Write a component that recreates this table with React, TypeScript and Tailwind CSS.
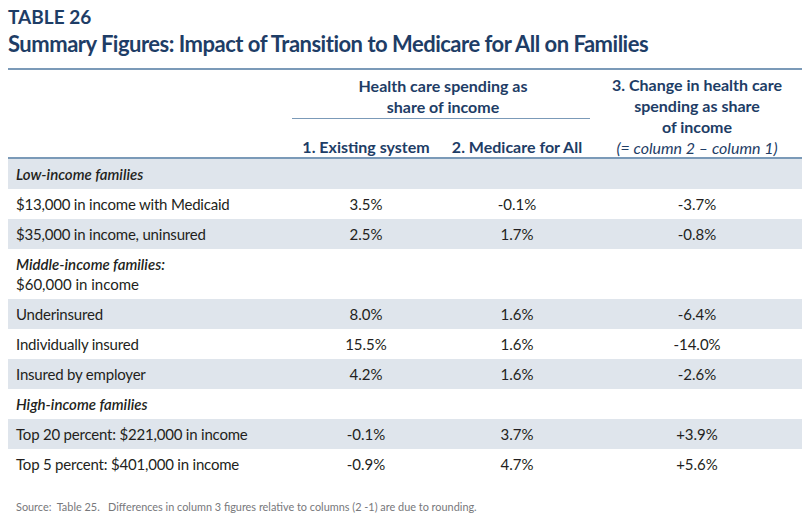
import React from "react";

type Row =
  | { kind: "cat"; label: string; shaded: boolean }
  | { kind: "cat2"; label: string; sub: string; shaded: boolean }
  | { kind: "data"; label: string; a: string; b: string; c: string; shaded: boolean };

const rows: Row[] = [
  { kind: "cat", label: "Low-income families", shaded: true },
  { kind: "data", label: "$13,000 in income with Medicaid", a: "3.5%", b: "-0.1%", c: "-3.7%", shaded: false },
  { kind: "data", label: "$35,000 in income, uninsured", a: "2.5%", b: "1.7%", c: "-0.8%", shaded: true },
  { kind: "cat2", label: "Middle-income families:", sub: "$60,000 in income", shaded: false },
  { kind: "data", label: "Underinsured", a: "8.0%", b: "1.6%", c: "-6.4%", shaded: true },
  { kind: "data", label: "Individually insured", a: "15.5%", b: "1.6%", c: "-14.0%", shaded: false },
  { kind: "data", label: "Insured by employer", a: "4.2%", b: "1.6%", c: "-2.6%", shaded: true },
  { kind: "cat", label: "High-income families", shaded: false },
  { kind: "data", label: "Top 20 percent: $221,000 in income", a: "-0.1%", b: "3.7%", c: "+3.9%", shaded: true },
  { kind: "data", label: "Top 5 percent: $401,000 in income", a: "-0.9%", b: "4.7%", c: "+5.6%", shaded: false },
];

export default function App() {
  return (
    <div
      className="w-[810px] h-[525px] bg-white overflow-hidden text-[#231f20]"
      style={{ fontFamily: "Lato, 'Noto Sans', sans-serif" }}
    >
      <div className="px-2 pt-[6px]">
        <div className="text-[19px] leading-[22px] font-bold text-[#1e3d66]">TABLE 26</div>
        <div className="text-[22px] leading-[28px] font-bold tracking-[-0.5px] text-[#1e3d66] mt-[2px]">
          Summary Figures: Impact of Transition to Medicare for All on Families
        </div>
      </div>

      <div className="mx-2 mt-[10px] w-[794px]">
        {/* header */}
        <div className="flex border-t-2 border-b-2 border-[#7b9ab8] h-[91px] text-[16px] leading-[21px] font-bold text-[#1e3d66]">
          <div className="w-[282px]" />
          <div className="w-[302px] flex flex-col">
            <div className="pt-[5px] text-center px-[2px]">
              <div className="pl-[4px]">Health care spending as</div>
              <div className="pl-[4px]">share of income</div>
            </div>
            <div className="mx-[2px] mt-[1px] border-b-[1.5px] border-[#7b9ab8]" />
            <div className="flex-1" />
            <div className="flex">
              <div className="w-[152px] text-center">1. Existing system</div>
              <div className="w-[150px] text-center">2. Medicare for All</div>
            </div>
          </div>
          <div className="w-[210px] pt-[4px] text-center">
            <div>3. Change in health care</div>
            <div>spending as share</div>
            <div>of income</div>
            <div className="italic font-normal">(= column 2 – column 1)</div>
          </div>
        </div>

        {/* body */}
        {rows.map((r, i) => {
          const bg = r.shaded ? "bg-[#dfe5ec]" : "bg-white";
          if (r.kind === "cat") {
            return (
              <div key={i} className={`${bg} h-[30px] flex items-center px-2 text-[15px] italic font-semibold`}>
                {r.label}
              </div>
            );
          }
          if (r.kind === "cat2") {
            return (
              <div key={i} className={`${bg} h-[50px] flex flex-col justify-center px-2 text-[15px] leading-[20px]`}>
                <div className="italic font-semibold">{r.label}</div>
                <div>{r.sub}</div>
              </div>
            );
          }
          return (
            <div key={i} className={`${bg} h-[30px] flex items-center text-[15px]`}>
              <div className="w-[282px] px-2 tracking-[-0.2px]">{r.label}</div>
              <div className="w-[152px] text-center">{r.a}</div>
              <div className="w-[150px] text-center">{r.b}</div>
              <div className="w-[210px] text-center">{r.c}</div>
            </div>
          );
        })}
      </div>

      <div className="px-4 mt-[20px] text-[10.9px] text-[#77787b]">
        Source:&nbsp; Table 25.&nbsp;&nbsp; Differences in column 3 figures relative to columns (2 -1) are due to rounding.
      </div>
    </div>
  );
}
